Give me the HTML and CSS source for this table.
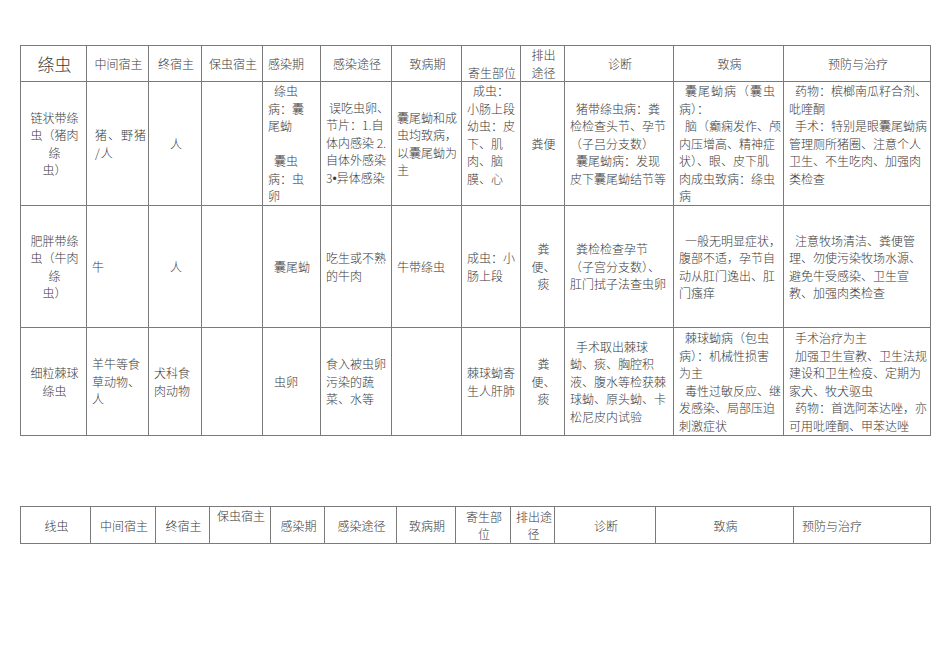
FILE: index.html
```html
<!DOCTYPE html>
<html lang="zh">
<head>
<meta charset="utf-8">
<title>绦虫 线虫</title>
<link rel="stylesheet" href="styles.css">
</head>
<body>
<div class="page">
<table class="grid t1">
<colgroup>
<col class="w66"><col class="w62"><col class="w53"><col class="w61"><col class="w58"><col class="w71"><col class="w70"><col class="w59"><col class="w44"><col class="w109"><col class="w110"><col class="w147">
</colgroup>
<tr class="head">
<th class="c big">绦虫</th>
<th class="c">中间宿主</th>
<th class="c">终宿主</th>
<th class="c">保虫宿主</th>
<th class="l">感染期</th>
<th class="c">感染途径</th>
<th class="c">致病期</th>
<th class="c bot">寄生部位</th>
<th class="c">排出<br>途径</th>
<th class="c">诊断</th>
<th class="c">致病</th>
<th class="c">预防与治疗</th>
</tr>
<tr class="r1">
<td class="c">链状带绦<br>虫（猪肉<br>绦<br>虫）</td>
<td class="l sp">猪、野猪<br>/人</td>
<td class="c">人</td>
<td></td>
<td class="l"><span class="ind">绦虫</span><br>病：囊<br>尾蚴<br>&nbsp;<br><span class="ind">囊虫</span><br>病：虫<br>卵</td>
<td class="l"><span class="ind2">误吃虫卵、</span><br>节片：1.自<br>体内感染 2.<br>自体外感染<br>3<span class="dot">•</span>异体感染</td>
<td class="l">囊尾蚴和成<br>虫均致病，<br>以囊尾蚴为<br>主</td>
<td class="l top"><span class="ind">成虫：</span><br>小肠上段<br>幼虫：皮<br>下、肌<br>肉、脑<br>膜、心</td>
<td class="c">粪便</td>
<td class="l"><span class="ind">猪带绦虫病：粪</span><br>检检查头节、孕节<br>（子吕分支数）<br><span class="ind">囊尾蚴病：发现</span><br>皮下囊尾蚴结节等</td>
<td class="l"><span class="ind sp3">囊尾蚴病（囊虫</span><br>病）：<br><span class="ind">脑（癫痫发作、颅</span><br>内压增高、精神症<br>状）、眼、皮下肌<br>肉成虫致病：绦虫<br>病</td>
<td class="l top"><span class="ind">药物：槟榔南瓜籽合剂、</span><br>吡喹酮<br><span class="ind">手术：特别是眼囊尾蚴病</span><br>管理厕所猪圈、注意个人<br>卫生、不生吃肉、加强肉<br>类检查</td>
</tr>
<tr class="r2">
<td class="c">肥胖带绦<br>虫（牛肉<br>绦<br>虫）</td>
<td class="l">牛</td>
<td class="c">人</td>
<td></td>
<td class="l"><span class="ind">囊尾蚴</span></td>
<td class="l">吃生或不熟<br>的牛肉</td>
<td class="l">牛带绦虫</td>
<td class="l">成虫：小<br>肠上段</td>
<td class="c">粪<br>便、<br>痰</td>
<td class="l"><span class="ind">粪检检查孕节</span><br>（子宫分支数）、<br>肛门拭子法查虫卵</td>
<td class="l"><span class="ind">一般无明显症状，</span><br>腹部不适，孕节自<br>动从肛门逸出、肛<br>门瘙痒</td>
<td class="l"><span class="ind">注意牧场清洁、粪便管</span><br>理、勿使污染牧场水源、<br>避免牛受感染、卫生宣<br>教、加强肉类检查</td>
</tr>
<tr class="r3">
<td class="c">细粒棘球<br>绦虫</td>
<td class="l">羊牛等食<br>草动物、<br>人</td>
<td class="l">犬科食<br>肉动物</td>
<td></td>
<td class="l"><span class="ind">虫卵</span></td>
<td class="l">食入被虫卵<br>污染的蔬<br>菜、水等</td>
<td class="l"></td>
<td class="l">棘球蚴寄<br>生人肝肺</td>
<td class="c">粪<br>便、<br>痰</td>
<td class="l"><span class="ind">手术取出棘球</span><br>蚴、痰、胸腔积<br>液、腹水等检获棘<br>球蚴、原头蚴、卡<br>松尼皮内试验</td>
<td class="l"><span class="ind">棘球蚴病（包虫</span><br>病）：机械性损害<br>为主<br><span class="ind">毒性过敏反应、继</span><br>发感染、局部压迫<br>刺激症状</td>
<td class="l"><span class="ind">手术治疗为主</span><br><span class="ind">加强卫生宣教、卫生法规</span><br>建设和卫生检疫、定期为<br>家犬、牧犬驱虫<br><span class="ind">药物：首选阿苯达唑，亦</span><br>可用吡喹酮、甲苯达唑</td>
</tr>
</table>

<table class="grid t2">
<colgroup>
<col class="w70"><col class="w65"><col class="w54"><col class="w61"><col class="w54"><col class="w72"><col class="w59"><col class="w55"><col class="w44"><col class="w101"><col class="w138"><col class="w137">
</colgroup>
<tr class="head2">
<td class="c">线虫</td>
<td class="c">中间宿主</td>
<td class="c">终宿主</td>
<td class="c top">保虫宿主</td>
<td class="c">感染期</td>
<td class="c">感染途径</td>
<td class="c">致病期</td>
<td class="c">寄生部<br>位</td>
<td class="c">排出途<br>径</td>
<td class="c">诊断</td>
<td class="c">致病</td>
<td class="l pl">预防与治疗</td>
</tr>
</table>
</div>
</body>
</html>
```

FILE: styles.css
```css
html, body {
  margin: 0;
  padding: 0;
  background: #ffffff;
}

.page {
  padding: 45px 0 0 20px;
  font-family: "Noto Sans CJK SC", "Noto Sans", sans-serif;
  font-weight: 300;
  color: #3a3a3a;
  font-size: 12px;
}

.grid {
  border-collapse: collapse;
  table-layout: fixed;
  width: 910px;
}

.grid th,
.grid td {
  border: 1px solid #7a7a7a;
  padding: 0 3px 0 5px;
  line-height: 17.5px;
  vertical-align: middle;
  white-space: nowrap;
  overflow: hidden;
  font-weight: 300;
  font-size: 12px;
}

.t2 {
  margin-top: 70px;
}

.head th { height: 35px; }
.r1 td { height: 123px; }
.r2 td { height: 121px; }
.r3 td { height: 107px; }
.head2 td { height: 36px; line-height: 17px; }

.c { text-align: center; }
.l { text-align: left; }
.top { vertical-align: top !important; padding-top: 1px; }
.bot { vertical-align: bottom !important; padding-bottom: 0; }
.pl { padding-left: 8px !important; }

.big {
  font-size: 17px !important;
}

.ind { padding-left: 6px; }
.ind2 { padding-left: 3px; }
.sp { letter-spacing: 1px; padding-left: 8px !important; }
.sp3 { letter-spacing: 1px; }
.dot { font-family: "Liberation Sans", sans-serif; }

.w44 { width: 44px; }
.w53 { width: 53px; }
.w54 { width: 54px; }
.w55 { width: 55px; }
.w58 { width: 58px; }
.w59 { width: 59px; }
.w61 { width: 61px; }
.w62 { width: 62px; }
.w65 { width: 65px; }
.w66 { width: 66px; }
.w70 { width: 70px; }
.w71 { width: 71px; }
.w72 { width: 72px; }
.w101 { width: 101px; }
.w109 { width: 109px; }
.w110 { width: 110px; }
.w137 { width: 137px; }
.w138 { width: 138px; }
.w147 { width: 147px; }
```
